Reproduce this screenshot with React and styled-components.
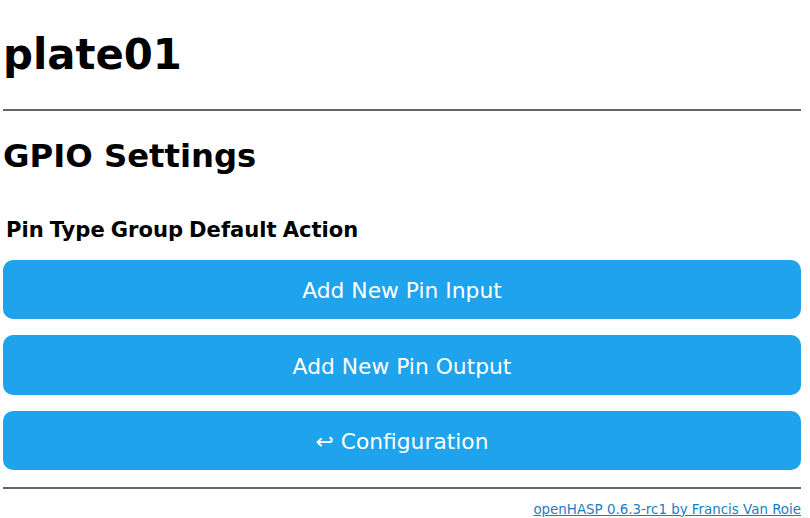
import React from "react";
import styled, { createGlobalStyle } from "styled-components";

const GlobalStyle = createGlobalStyle`
  html, body {
    margin: 0;
    padding: 0;
    background: #ffffff;
  }
  body {
    font-family: "DejaVu Sans", Verdana, sans-serif;
    color: #000000;
  }
`;

const Page = styled.div`
  width: 798px;
  padding: 31px 0 0 3px;
  display: flex;
  flex-direction: column;
`;

const Title = styled.h1`
  margin: 0;
  font-size: 41.8px;
  line-height: 48px;
  font-weight: bold;
`;

const Rule = styled.hr`
  margin: ${(p) => p.$top}px 0 0 0;
  border: 0;
  height: 2px;
  background: #666666;
`;

const Subtitle = styled.h2`
  margin: 26px 0 0 0;
  font-size: 32.3px;
  line-height: 38px;
  font-weight: bold;
`;

const HeaderRow = styled.div`
  margin: 43px 0 0 3px;
  display: flex;
  gap: 6px;
  font-size: 21.1px;
  line-height: 24px;
  font-weight: bold;
`;

const ButtonList = styled.div`
  margin-top: 17.5px;
  display: flex;
  flex-direction: column;
  gap: 16px;
`;

const Button = styled.button`
  width: 100%;
  height: 59.5px;
  padding: 3px 0 0 0;
  border: 0;
  border-radius: 10px;
  background-color: #1fa3ec;
  color: #ffffff;
  font-family: "DejaVu Sans", Verdana, sans-serif;
  font-size: 21.8px;
  cursor: pointer;
`;

const Footer = styled.div`
  margin-top: 12px;
  text-align: right;
  font-size: 13.4px;
  line-height: 17px;
`;

const FooterLink = styled.a`
  color: #1a7dc4;
  text-decoration: underline;
`;

const columns = ["Pin", "Type", "Group", "Default", "Action"];

function App() {
  return (
    <>
      <GlobalStyle />
      <Page>
        <Title>plate01</Title>
        <Rule $top={30} />
        <Subtitle>GPIO Settings</Subtitle>
        <HeaderRow>
          {columns.map((c) => (
            <span key={c}>{c}</span>
          ))}
        </HeaderRow>
        <ButtonList>
          <Button>Add New Pin Input</Button>
          <Button>Add New Pin Output</Button>
          <Button>&#x21A9; Configuration</Button>
        </ButtonList>
        <Rule $top={16.5} />
        <Footer>
          <FooterLink href="#">openHASP 0.6.3-rc1 by Francis Van Roie</FooterLink>
        </Footer>
      </Page>
    </>
  );
}

export default App;
